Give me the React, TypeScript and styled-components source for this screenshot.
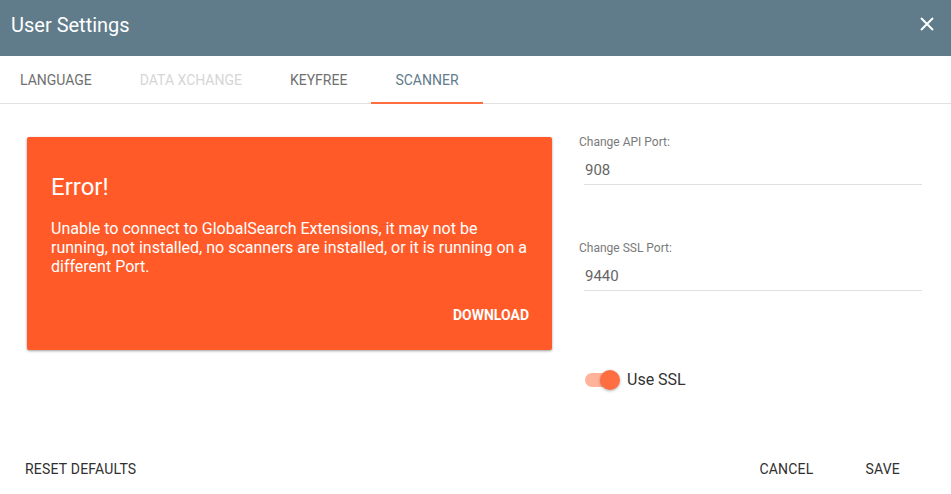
import React, { useState } from "react";
import styled, { createGlobalStyle } from "styled-components";

const Global = createGlobalStyle`
  html, body { margin: 0; padding: 0; background: #fff; }
  body { font-family: Roboto, "Noto Sans", sans-serif; -webkit-font-smoothing: antialiased; }
  * { box-sizing: border-box; }
`;

const Dialog = styled.div`
  width: 951px;
  height: 494px;
  display: flex;
  flex-direction: column;
  background: #fff;
  overflow: hidden;
`;

const Header = styled.header`
  height: 56px;
  flex: none;
  background: #607b8a;
  display: flex;
  align-items: center;
  justify-content: space-between;
  padding: 0 16px 0 11px;
`;

const Title = styled.h1`
  margin: 0;
  font-size: 20px;
  font-weight: 400;
  color: #fff;
  letter-spacing: 0;
  padding-bottom: 7px;
`;

const CloseButton = styled.button`
  width: 16px;
  height: 16px;
  border: 0;
  padding: 0;
  background: none;
  display: flex;
  align-items: center;
  justify-content: center;
  cursor: pointer;
  margin-bottom: 8px;
`;

const TabBar = styled.nav`
  height: 48px;
  flex: none;
  display: flex;
  border-bottom: 1px solid #e2e2e2;
  margin-left: -4px;
`;

const Tab = styled.button<{ $active?: boolean; $disabled?: boolean }>`
  height: 48px;
  padding: 1px 24px 0;
  border: 0;
  background: none;
  font-family: inherit;
  font-size: 14px;
  font-weight: 400;
  text-transform: uppercase;
  color: ${(p) => (p.$disabled ? "#d6d6d6" : p.$active ? "#607b8a" : "#6f6f6f")};
  border-bottom: 2px solid ${(p) => (p.$active ? "#ff6e40" : "transparent")};
  margin-bottom: -1px;
  cursor: pointer;
`;

const Body = styled.main`
  flex: 1;
  display: flex;
  padding: 33px 29px 0 27px;
  gap: 27px;
`;

const Card = styled.section`
  width: 525px;
  height: 213px;
  flex: none;
  background: #ff5a28;
  border-radius: 2px;
  box-shadow: 0 1px 3px rgba(0, 0, 0, 0.25), 0 1px 2px rgba(0, 0, 0, 0.15);
  color: #fff;
  padding: 34px 20px 0 24px;
  display: flex;
  flex-direction: column;
`;

const CardTitle = styled.h2`
  margin: 0;
  font-size: 24px;
  font-weight: 400;
  line-height: 32px;
`;

const CardText = styled.p`
  margin: 16px 0 0;
  font-size: 16px;
  font-weight: 400;
  line-height: 19px;
  color: #fff;
`;

const CardActions = styled.div`
  margin-top: auto;
  height: 70px;
  display: flex;
  justify-content: flex-end;
  align-items: center;
  padding-right: 3px;
`;

const FlatButton = styled.button<{ $color?: string; $weight?: number; $spacing?: string }>`
  border: 0;
  background: none;
  padding: 0;
  font-family: inherit;
  font-size: 14px;
  font-weight: ${(p) => p.$weight ?? 400};
  letter-spacing: ${(p) => p.$spacing ?? "0.2px"};
  text-transform: uppercase;
  color: ${(p) => p.$color ?? "#303030"};
  cursor: pointer;
`;

const Side = styled.aside`
  flex: 1;
  display: flex;
  flex-direction: column;
`;

const Field = styled.label`
  display: flex;
  flex-direction: column;
  margin-bottom: 58px;
`;

const FieldLabel = styled.span`
  font-size: 12px;
  color: #7a7a7a;
  line-height: 14px;
  margin-top: -2px;
`;

const FieldInput = styled.input`
  margin: 11px 0 0 5px;
  border: 0;
  border-bottom: 1px solid #e0e0e0;
  padding: 0 0 4px 1px;
  font-family: inherit;
  font-size: 15px;
  color: #666;
  outline: none;
  background: none;
  line-height: 20px;
`;

const ToggleRow = styled.label`
  display: flex;
  align-items: center;
  gap: 8px;
  margin: 21px 0 0 6px;
  font-size: 16px;
  color: #333;
  cursor: pointer;
`;

const Track = styled.span<{ $on: boolean }>`
  position: relative;
  width: 34px;
  height: 14px;
  border-radius: 7px;
  background: ${(p) => (p.$on ? "#ffb39b" : "#bdbdbd")};
  flex: none;
`;

const Thumb = styled.span<{ $on: boolean }>`
  position: absolute;
  top: -3px;
  left: ${(p) => (p.$on ? "15px" : "0")};
  width: 20px;
  height: 20px;
  border-radius: 50%;
  background: ${(p) => (p.$on ? "#ff6e40" : "#f5f5f5")};
  box-shadow: 0 1px 3px rgba(0, 0, 0, 0.3);
`;

const Footer = styled.footer`
  height: 56px;
  flex: none;
  display: flex;
  align-items: center;
  padding: 6px 51px 0 25px;
`;

const Spacer = styled.div`
  flex: 1;
`;

const FooterActions = styled.div`
  display: flex;
  gap: 52px;
`;

export default function App() {
  const [ssl, setSsl] = useState(true);
  const [apiPort, setApiPort] = useState("908");
  const [sslPort, setSslPort] = useState("9440");

  return (
    <Dialog>
      <Global />
      <Header>
        <Title>User Settings</Title>
        <CloseButton aria-label="Close">
          <svg width="14" height="14" viewBox="0 0 14 14">
            <path d="M1 1L13 13M13 1L1 13" stroke="#fff" strokeWidth="2" />
          </svg>
        </CloseButton>
      </Header>
      <TabBar>
        <Tab>Language</Tab>
        <Tab $disabled>Data XChange</Tab>
        <Tab>Keyfree</Tab>
        <Tab $active>Scanner</Tab>
      </TabBar>
      <Body>
        <Card>
          <CardTitle>Error!</CardTitle>
          <CardText>
            Unable to connect to GlobalSearch Extensions, it may not be running, not installed, no
            scanners are installed, or it is running on a different Port.
          </CardText>
          <CardActions>
            <FlatButton $color="#fff" $weight={700} $spacing="0">
              Download
            </FlatButton>
          </CardActions>
        </Card>
        <Side>
          <Field>
            <FieldLabel>Change API Port:</FieldLabel>
            <FieldInput value={apiPort} onChange={(e) => setApiPort(e.target.value)} />
          </Field>
          <Field>
            <FieldLabel>Change SSL Port:</FieldLabel>
            <FieldInput value={sslPort} onChange={(e) => setSslPort(e.target.value)} />
          </Field>
          <ToggleRow onClick={() => setSsl(!ssl)}>
            <Track $on={ssl}>
              <Thumb $on={ssl} />
            </Track>
            Use SSL
          </ToggleRow>
        </Side>
      </Body>
      <Footer>
        <FlatButton>Reset Defaults</FlatButton>
        <Spacer />
        <FooterActions>
          <FlatButton>Cancel</FlatButton>
          <FlatButton>Save</FlatButton>
        </FooterActions>
      </Footer>
    </Dialog>
  );
}
